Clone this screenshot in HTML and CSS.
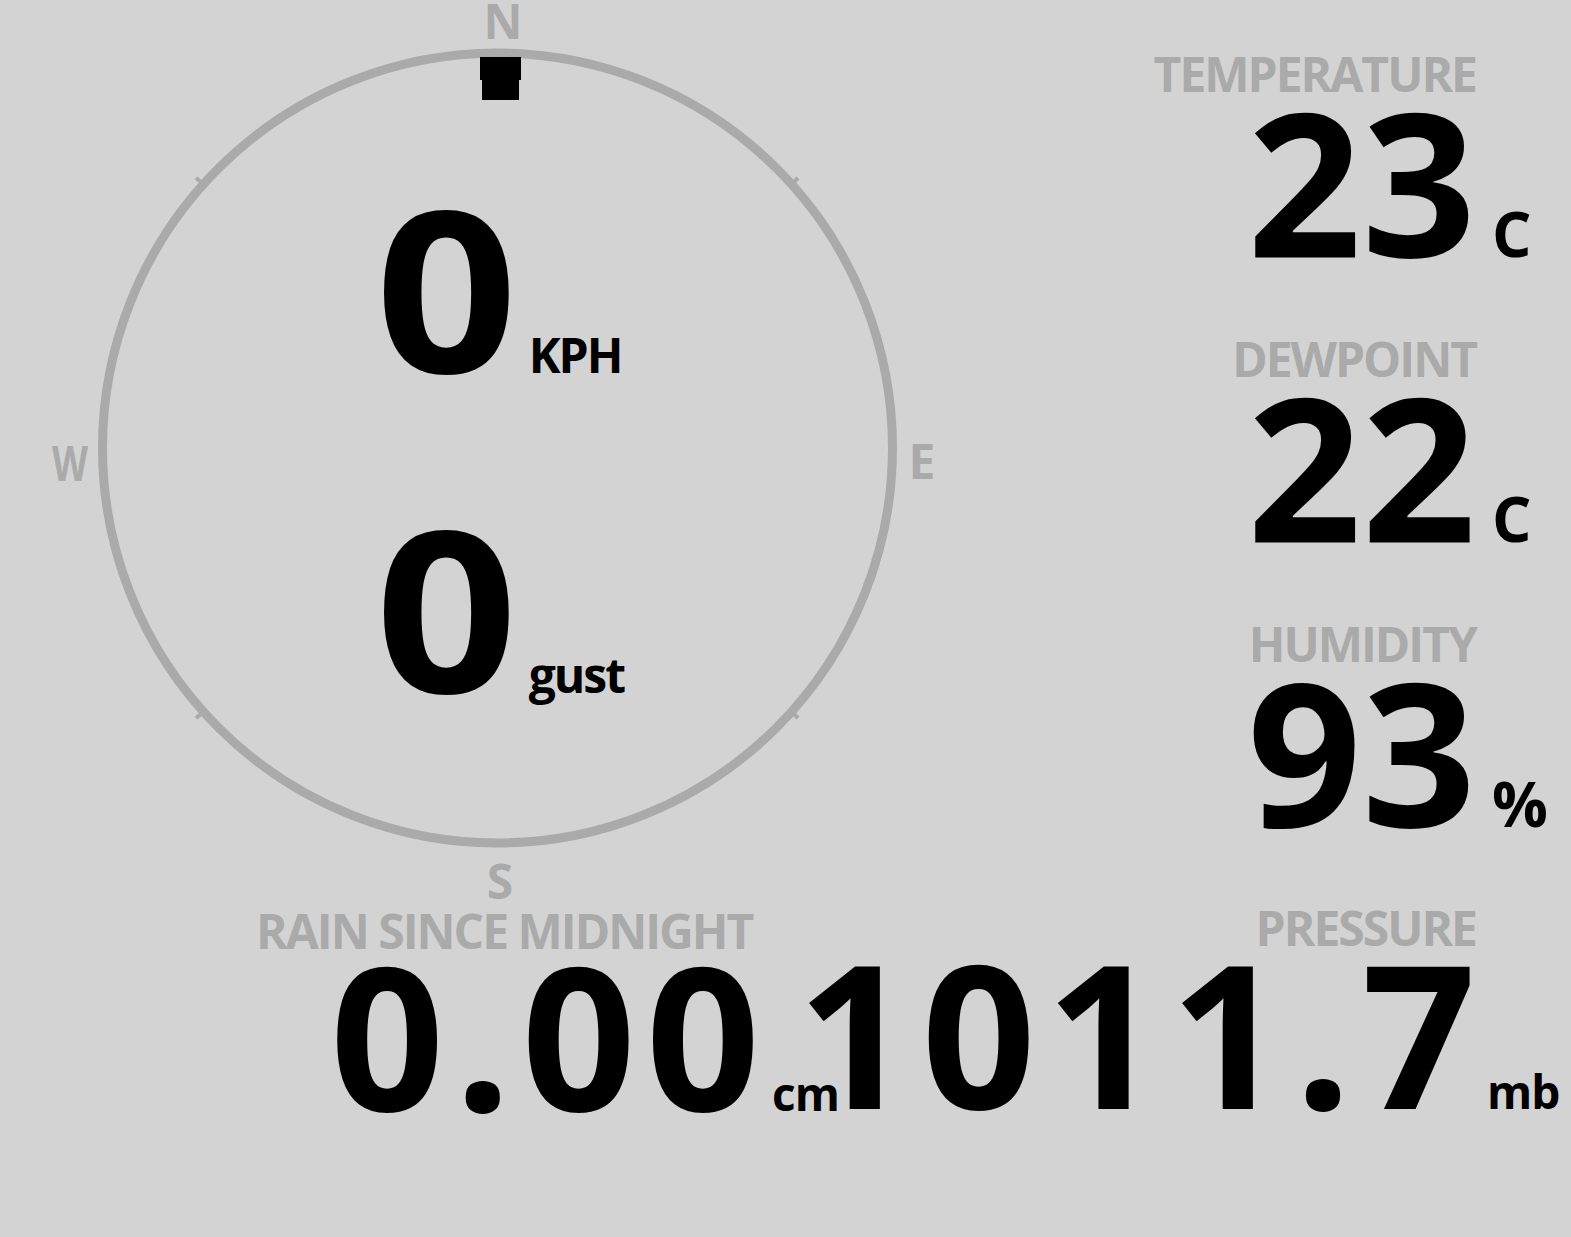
FILE: index.html
```html
<!DOCTYPE html>
<html lang="en">
<head>
    <meta charset="UTF-8">
    <meta name="viewport" content="width=device-width, initial-scale=1.0">
    <title>Weather Station</title>
    <link rel="stylesheet" href="styles.css">
</head>
<body>
    <div class="station">
        <div class="top">
            <div class="wind">
                <svg class="compass" width="995" height="930" viewBox="0 0 995 930">
                    <circle cx="497.5" cy="448" r="395" fill="none" stroke="#aaaaaa" stroke-width="9"/>
                    <g stroke="#aaaaaa" stroke-width="4">
                        <line x1="196" y1="178" x2="206" y2="186"/>
                        <line x1="798" y1="178" x2="790" y2="186"/>
                        <line x1="196" y1="718" x2="206" y2="710"/>
                        <line x1="798" y1="718" x2="790" y2="710"/>
                    </g>
                    <polygon class="needle" points="480,57 521,57 521,80 519,80 519,100 482,100 482,80 480,80"/>
                    <text x="503" y="39">N</text>
                    <text x="500" y="899">S</text>
                    <text x="922" y="479">E</text>
                    <text x="70" y="481" textLength="36" lengthAdjust="spacingAndGlyphs">W</text>
                </svg>
                <div class="speed">
                    <span class="speed-value">0</span>
                    <span class="speed-unit">KPH</span>
                </div>
                <div class="speed">
                    <span class="speed-value">0</span>
                    <span class="speed-unit">gust</span>
                </div>
            </div>
            <div class="readings">
                <div class="reading">
                    <div class="label">TEMPERATURE</div>
                    <div class="value">
                        <span class="number">23</span>
                        <span class="unit">C</span>
                    </div>
                </div>
                <div class="reading">
                    <div class="label">DEWPOINT</div>
                    <div class="value">
                        <span class="number">22</span>
                        <span class="unit">C</span>
                    </div>
                </div>
                <div class="reading">
                    <div class="label">HUMIDITY</div>
                    <div class="value">
                        <span class="number">93</span>
                        <span class="unit">%</span>
                    </div>
                </div>
            </div>
        </div>
        <div class="bottom">
            <div class="rain">
                <div class="label">RAIN SINCE MIDNIGHT</div>
                <div class="value">
                    <span class="number">0.00</span>
                    <span class="small-unit">cm</span>
                </div>
            </div>
            <div class="pressure">
                <div class="label">PRESSURE</div>
                <div class="value">
                    <span class="number">1011.7</span>
                    <span class="unit small">mb</span>
                </div>
            </div>
        </div>
    </div>
</body>
</html>
```

FILE: styles.css
```css
body {
    margin: 0;
    background-color: #d3d3d3;
    font-family: "Open Sans", "Liberation Sans", sans-serif;
    font-weight: 700;
    color: #000;
}

.station {
    width: 1571px;
    height: 1237px;
    overflow: hidden;
}

.top {
    display: flex;
}

/* wind dial */
.wind {
    position: relative;
    width: 995px;
    height: 905px;
    padding-top: 174px;
    box-sizing: border-box;
    display: flex;
    flex-direction: column;
    gap: 95px;
}
.compass {
    position: absolute;
    left: 0;
    top: 0;
    overflow: visible;
}
.compass text {
    font-family: "Open Sans", "Liberation Sans", sans-serif;
    font-weight: 700;
    font-size: 48px;
    fill: #aaaaaa;
    text-anchor: middle;
}
.needle {
    fill: #000;
}
.speed {
    position: relative;
    display: flex;
    align-items: baseline;
    padding-left: 382px;
}
.speed-value {
    font-size: 225px;
    line-height: 225px;
    transform: scaleX(1.11);
}
.speed-unit {
    font-size: 48px;
    letter-spacing: -2px;
    margin-left: 18px;
}

/* readings */
.readings {
    flex: 1;
    display: flex;
    flex-direction: column;
    align-items: flex-end;
    padding-top: 50px;
    padding-right: 95px;
}
.reading {
    height: 285px;
    display: flex;
    flex-direction: column;
    align-items: flex-end;
}
.label {
    font-size: 48px;
    line-height: 48px;
    letter-spacing: -2px;
    color: #aaaaaa;
    white-space: nowrap;
}
.value {
    display: flex;
    align-items: baseline;
    margin-top: 7px;
}
.number {
    font-size: 200px;
    line-height: 150px;
    white-space: nowrap;
}
.unit {
    font-size: 62px;
    width: 0;
    margin-left: 16px;
    margin-right: -16px;
    white-space: nowrap;
}
.unit.small {
    font-size: 46px;
    letter-spacing: -1px;
    margin-left: 11px;
    margin-right: -11px;
}
.small-unit {
    font-size: 46px;
    letter-spacing: -1px;
    margin-left: 2px;
}

/* bottom row */
.bottom {
    display: flex;
    align-items: flex-start;
}
.bottom .number {
    letter-spacing: 10px;
}
.rain {
    flex: none;
    margin-left: 256px;
    margin-top: 2px;
}
.rain .value {
    padding-left: 74px;
    margin-top: 4px;
}
.pressure {
    flex: none;
    width: 520px;
    margin-left: auto;
    margin-top: -1px;
    padding-right: 95px;
    display: flex;
    flex-direction: column;
    align-items: flex-end;
}
.pressure .value {
    margin-top: 5px;
}
.pressure .number {
    margin-right: -10px;
}
```
